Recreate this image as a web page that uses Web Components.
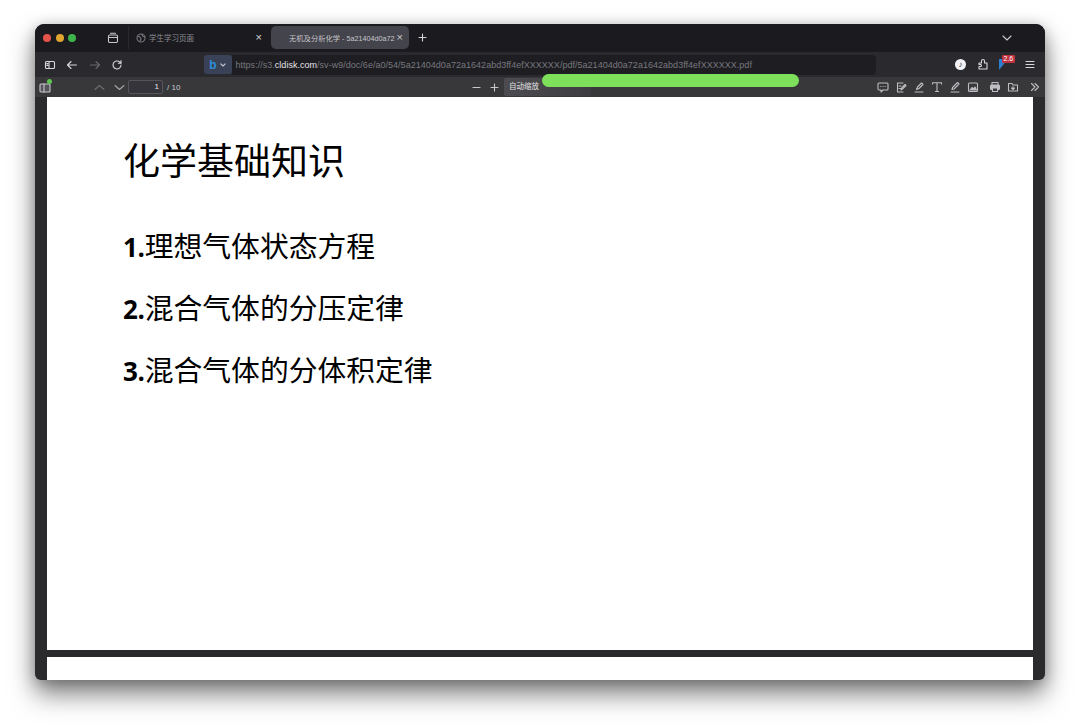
<!DOCTYPE html>
<html lang="zh">
<head>
<meta charset="utf-8">
<title>化学基础知识</title>
<style>
  html, body { margin: 0; height: 100%; background: #fff; overflow: hidden; }
  body { font-family: "Liberation Sans", "Noto Sans CJK SC", sans-serif; }
</style>
</head>
<body>
<browser-window>
  <tab-bar slot="chrome"></tab-bar>
  <nav-bar slot="chrome"></nav-bar>
  <pdf-toolbar slot="chrome"></pdf-toolbar>
  <pdf-page>
    <h-title>化学基础知识</h-title>
    <list-line num="1.">理想气体状态方程</list-line>
    <list-line num="2.">混合气体的分压定律</list-line>
    <list-line num="3.">混合气体的分体积定律</list-line>
  </pdf-page>
</browser-window>

<script>
const CJK = '"Liberation Sans", "Noto Sans CJK SC", sans-serif';

function icon(w, h, body, extra) {
  return `<svg width="${w}" height="${h}" viewBox="0 0 ${w} ${h}" fill="none" stroke="currentColor" stroke-width="1.1" stroke-linecap="round" stroke-linejoin="round" ${extra || ''}>${body}</svg>`;
}

class BrowserWindow extends HTMLElement {
  constructor() {
    super();
    this.attachShadow({ mode: 'open' }).innerHTML = `
      <style>
        :host {
          display: flex;
          flex-direction: column;
          box-sizing: border-box;
          width: 1010px;
          height: 656px;
          margin: 24px 0 0 35px;
          border-radius: 9px 9px 6px 6px;
          background: #2b2b2e;
          box-shadow: 0 14px 26px rgba(0,0,0,.5), 0 2px 14px rgba(0,0,0,.22);
          overflow: hidden;
        }
        .body { flex: 1; min-height: 0; padding: 0 12px; display: flex; }
      </style>
      <slot name="chrome"></slot>
      <div class="body"><slot></slot></div>`;
  }
}

class TabBar extends HTMLElement {
  constructor() {
    super();
    this.attachShadow({ mode: 'open' }).innerHTML = `
      <style>
        :host {
          display: flex; align-items: center; box-sizing: border-box;
          height: 28px; padding-bottom: 1px; background: #1b1b1f; color: #d5d5d8;
          font-family: ${CJK};
          flex: none;
        }
        .dots { display: flex; gap: 4.500px; margin-left: 8px; width: 64px; }
        .dots i { width: 8px; height: 8px; border-radius: 50%; }
        .view { width: 20px; display: flex; color: #c8c8cc; }
        .tab { display: flex; align-items: center; box-sizing: border-box; height: 23px; font-size: 7.500px; }
        .t1 { width: 136px; border-left: 1px solid #2a2a2e; margin-left: 1px; padding: 0 2px 0 7px; color: #8d8d93; gap: 3px; }
        .t1 span { flex: 1; }
        .t1 b { color: #d8d8dc; }
        .t2 { width: 138px; margin-left: 7px; padding: 0 6px 0 18px; background: #44444d; border-radius: 5px; color: #c6c6ca; }
        .t2 span { flex: 1; white-space: nowrap; font-size: 7.200px; }
        .t2 u { text-decoration: none; font-size: 7.300px; }
        b { font-weight: 400; font-size: 11px; line-height: 1; }
        .plus { margin-left: 9px; color: #d8d8dc; display: flex; }
        .chev { margin-left: auto; margin-right: 33px; color: #c8c8cc; display: flex; }
      </style>
      <div class="dots"><i style="background:#e5534b"></i><i style="background:#e0a52e"></i><i style="background:#3db54a"></i></div>
      <div class="view">${icon(12, 12, '<rect x="1.500" y="3" width="9" height="7.500" rx="1.200"/><path d="M1.500 5.500h9M3.500 1.200h5"/>')}</div>
      <div class="tab t1">
        ${icon(10, 10, '<circle cx="5" cy="5" r="4"/><path d="M2 3l2 1 1 2-1 2M6 1.500l1 2 2 .5"/>', 'style="color:#77777d"')}
        <span>学生学习页面</span><b>×</b>
      </div>
      <div class="tab t2"><span><u>无机及分析化学</u> - 5a21404d0a72</span><b>×</b></div>
      <div class="plus">${icon(9, 9, '<path d="M4.500 1v7M1 4.500h7"/>')}</div>
      <div class="chev">${icon(10, 6, '<path d="M1 1l4 4 4-4"/>')}</div>`;
  }
}

class NavBar extends HTMLElement {
  constructor() {
    super();
    this.attachShadow({ mode: 'open' }).innerHTML = `
      <style>
        :host {
          display: flex; align-items: center;
          height: 25px; background: #2a2a2e; color: #d8d8dc; flex: none;
          font-family: ${CJK};
        }
        .ic { display: flex; width: 22.500px; justify-content: center; }
        .left { display: flex; margin-left: 3.500px; width: 165px; }
        .engine { display: flex; align-items: center; justify-content: center; gap: 3px; box-sizing: border-box; width: 28px; height: 19px; background: #3a4257; border-radius: 3px; }
        .engine em { font: 700 12px "Liberation Sans", sans-serif; color: #2f8fdc; }
        .url {
          box-sizing: border-box; width: 644px; height: 20px; padding-left: 4px;
          background: #1e1e22; border-radius: 0 4px 4px 0;
          display: flex; align-items: center;
          font-size: 9px; color: #77777e; white-space: nowrap; overflow: hidden;
          letter-spacing: .025px;
        }
        .url strong { font-weight: 400; color: #e4e4e8; }
        .right { display: flex; align-items: center; margin-left: auto; margin-right: 10px; }
        .music { width: 11px; height: 11px; border-radius: 50%; background: #f2f2f4; color: #222; display: flex; align-items: center; justify-content: center; font-size: 8px; font-weight: 700; margin-right: 11px; }
        .ext { position: relative; width: 18px; height: 18px; margin: 0 8px 0 10px; display:flex; }
        .ext .flag { position: absolute; left: 0; top: 3px; width: 0; height: 0; border-left: 9px solid #2d7fd0; border-bottom: 11px solid transparent; }
        .ext .badge { position: absolute; left: 3px; top: -1px; background: #c0313f; color: #fff; font-size: 7px; line-height: 8px; padding: 0 1.500px; border-radius: 1px; }
      </style>
      <div class="left">
        <div class="ic">${icon(12, 12, '<rect x="1.500" y="2.500" width="9" height="7" rx="1"/><path d="M5 2.500v7M2.800 4.600h1M2.800 6.400h1"/>')}</div>
        <div class="ic">${icon(12, 12, '<path d="M10.500 6h-9M5 2.500L1.500 6 5 9.500"/>', 'stroke-width="1.200"')}</div>
        <div class="ic" style="color:#66666c">${icon(12, 12, '<path d="M1.500 6h9M7 2.500L10.500 6 7 9.500"/>')}</div>
        <div class="ic">${icon(12, 12, '<path d="M10 6a4 4 0 1 1-1.200-2.900L10 4.300V1.600M10 4.300H7.400"/>')}</div>
      </div>
      <div class="engine"><em>b</em>${icon(6, 4, '<path d="M.8.8L3 3 5.200.8"/>', 'style="color:#c4c8d2"')}</div>
      <div class="url"><span>https://s3.<strong>cldisk.com</strong>/sv-w9/doc/6e/a0/54/5a21404d0a72a1642abd3ff4efXXXXXX/pdf/5a21404d0a72a1642abd3ff4efXXXXXX.pdf</span></div>
      <div class="right">
        <div class="music">♪</div>
        <div class="ic" style="width:12px">${icon(12, 13, '<path d="M2 5h2.500V3a1.500 1.500 0 0 1 3 0v2H10v6H2V8.500h1.500a1 1 0 0 0 0-2H2z"/>')}</div>
        <div class="ext"><span class="flag"></span><span class="badge">2.6</span></div>
        <div class="ic" style="width:10px">${icon(10, 9, '<path d="M1 1.500h8M1 4.500h8M1 7.500h8"/>')}</div>
      </div>`;
  }
}

class PdfToolbar extends HTMLElement {
  constructor() {
    super();
    this.attachShadow({ mode: 'open' }).innerHTML = `
      <style>
        :host {
          display: flex; align-items: center; position: relative;
          height: 20px; background: #38383b; color: #c9c9cd; flex: none;
          font-family: ${CJK}; font-size: 8px;
        }
        .side { position: relative; display: flex; margin-left: 4px; width: 55px; }
        .dot { position: absolute; left: 8px; top: -2px; width: 5px; height: 5px; border-radius: 50%; background: #5fc452; }
        .pager { display: flex; align-items: center; }
        .up { display: flex; width: 20px; color: #6c6c72; }
        .down { display: flex; width: 14px; color: #a4a4a9; }
        .num { box-sizing: border-box; width: 35px; height: 14px; border: 1px solid #55555b; background: #34343a; border-radius: 2px; text-align: right; padding-right: 3px; line-height: 12px; color: #e4e4e6; margin-right: 4px; }
        .zoom { display: flex; align-items: center; position: absolute; left: 432px; top: 0; height: 20px; }
        .zoom .btn { display: flex; width: 18px; justify-content: center; }
        .select { box-sizing: border-box; margin-left: 1px; padding: 0 4px 0 5px; width: 87px; height: 18px; line-height: 18px; background: linear-gradient(90deg, #4c4c50, #3e3e42); color: #e2e2e4; border-radius: 2px; font-size: 7.500px; }
        .tools { display: flex; align-items: center; margin-left: auto; margin-right: 1px; color: #bdbdc2; }
        .tools span { display: flex; width: 18px; justify-content: center; }
        .tools .gap { margin-left: 4px; }
        .progress { position: absolute; left: 507px; top: -3px; width: 257px; height: 13px; border-radius: 7px; background: #7ee05a; }
      </style>
      <div class="side">
        ${icon(12, 12, '<rect x="1" y="3" width="10" height="8" rx="1" fill="#55555b"/><path d="M5 3v8"/>')}
        <i class="dot"></i>
      </div>
      <div class="pager">
        <div class="up">${icon(11, 7, '<path d="M1 5.500L5.500 1.500 10 5.500"/>')}</div>
        <div class="down">${icon(11, 7, '<path d="M1 1.500L5.500 5.500 10 1.500"/>')}</div>
        <div class="num">1</div>
        <div>/ 10</div>
      </div>
      <div class="zoom">
        <div class="btn">${icon(9, 9, '<path d="M1 4.500h7"/>')}</div>
        <div class="btn">${icon(9, 9, '<path d="M4.500 1v7M1 4.500h7"/>')}</div>
        <div class="select">自动缩放</div>
      </div>
      <div class="tools">
        <span>${icon(12, 12, '<path d="M2 2h8a1 1 0 0 1 1 1v5a1 1 0 0 1-1 1H6l-2 2V9H2a1 1 0 0 1-1-1V3a1 1 0 0 1 1-1z"/><path d="M3.800 5.500h.1M6 5.500h.1M8.200 5.500h.1"/>')}</span>
        <span>${icon(12, 12, '<path d="M8 2H2.500v9H8M4 5h2M4 7.500h1.500M6 9l1-2.500L10 3.500l1 1-3 3z"/>')}</span>
        <span>${icon(12, 12, '<path d="M2 11h8M3.500 8.500l1-2.500L8.500 2l1.500 1.500-4 4z"/>')}</span>
        <span>${icon(12, 12, '<path d="M1.500 3V1.800h9V3M6 1.800V10.500M4.500 10.500h3"/>')}</span>
        <span>${icon(12, 12, '<path d="M2 11h8M3 8.500l.5-2L8.500 1.500 10 3 5 8z"/>')}</span>
        <span>${icon(12, 12, '<rect x="1.500" y="2" width="9" height="8.500" rx="1"/><path d="M3 9l2-2.500 1.500 1.500L8 6l1.500 3z" fill="currentColor"/>')}</span>
        <span class="gap">${icon(12, 12, '<path d="M3 4V1.500h6V4" /><rect x="1.500" y="4" width="9" height="4.500" rx="1" fill="currentColor"/><rect x="3.500" y="7" width="5" height="3.500" fill="#38383b"/>')}</span>
        <span>${icon(12, 12, '<path d="M1.500 2.500h3.500l1 1.500h4.500v6h-9zM6 5.500v3M4.500 7L6 8.500 7.500 7"/>')}</span>
        <span class="gap">${icon(10, 10, '<path d="M1.500 1.500L5 5 1.500 8.500M5 1.500L8.500 5 5 8.500"/>')}</span>
      </div>
      <div class="progress"></div>`;
  }
}

class PdfPage extends HTMLElement {
  constructor() {
    super();
    this.attachShadow({ mode: 'open' }).innerHTML = `
      <style>
        :host { display: flex; flex-direction: column; flex: 1; min-width: 0; gap: 7px; }
        .sheet { background: #fff; box-sizing: border-box; }
        .first { height: 553px; padding: 40px 0 0 76px; display: flex; flex-direction: column; }
        .second { flex: 1; }
      </style>
      <div class="sheet first"><slot></slot></div>
      <div class="sheet second"></div>`;
  }
}

class HTitle extends HTMLElement {
  constructor() {
    super();
    this.attachShadow({ mode: 'open' }).innerHTML = `
      <style>
        :host { display: block; font: 400 37px/44px "Noto Sans CJK SC", sans-serif; color: #000; margin-bottom: 42px; }
      </style>
      <slot></slot>`;
  }
}

class ListLine extends HTMLElement {
  constructor() {
    super();
    this.attachShadow({ mode: 'open' }).innerHTML = `
      <style>
        :host { display: flex; align-items: baseline; height: 62px; font: 400 28.800px/44px "Noto Sans CJK SC", sans-serif; color: #000; }
        b { font: 700 26px/44px "Open Sans", sans-serif; letter-spacing: -.3px; }
      </style>
      <b>${this.getAttribute('num')}</b><span><slot></slot></span>`;
  }
}

customElements.define('browser-window', BrowserWindow);
customElements.define('tab-bar', TabBar);
customElements.define('nav-bar', NavBar);
customElements.define('pdf-toolbar', PdfToolbar);
customElements.define('pdf-page', PdfPage);
customElements.define('h-title', HTitle);
customElements.define('list-line', ListLine);
</script>
</body>
</html>
